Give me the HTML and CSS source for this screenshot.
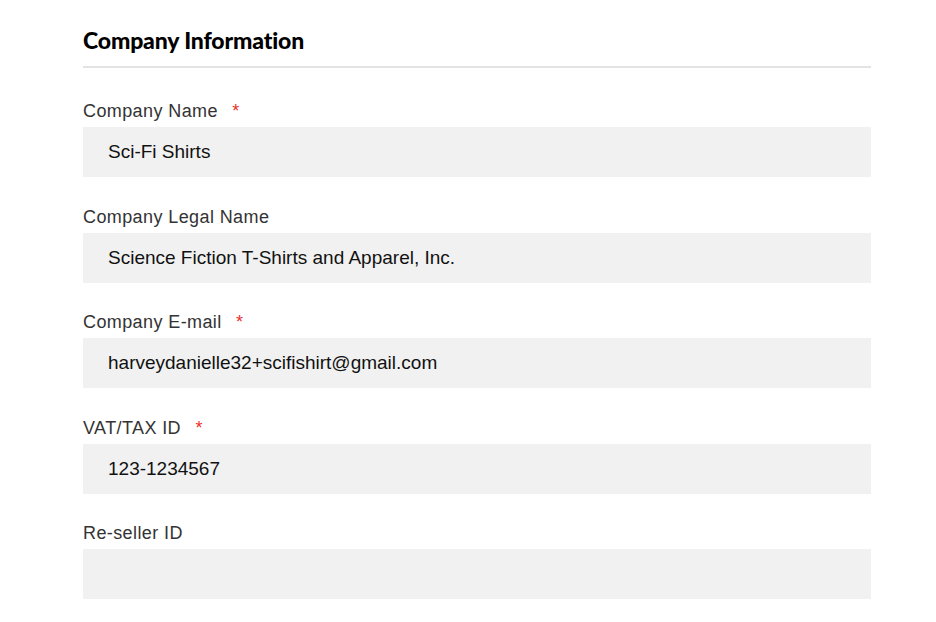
FILE: index.html
```html
<!DOCTYPE html>
<html lang="en">
<head>
    <meta charset="UTF-8">
    <meta name="viewport" content="width=device-width, initial-scale=1.0">
    <title>Company Information</title>
    <link rel="stylesheet" href="styles.css">
</head>
<body>
    <div class="container">
        <h2 class="section-title">Company Information</h2>

        <div class="field">
            <label>Company Name <span class="required">*</span></label>
            <div class="input">Sci-Fi Shirts</div>
        </div>

        <div class="field">
            <label>Company Legal Name</label>
            <div class="input">Science Fiction T-Shirts and Apparel, Inc.</div>
        </div>

        <div class="field">
            <label>Company E-mail <span class="required">*</span></label>
            <div class="input">harveydanielle32+scifishirt@gmail.com</div>
        </div>

        <div class="field">
            <label>VAT/TAX ID <span class="required">*</span></label>
            <div class="input">123-1234567</div>
        </div>

        <div class="field">
            <label>Re-seller ID</label>
            <div class="input"></div>
        </div>
    </div>
</body>
</html>
```

FILE: styles.css
```css
body {
    font-family: "Liberation Sans", Arial, sans-serif;
    margin: 0;
    padding: 0;
    background-color: #fff;
}
.container {
    width: 788px;
    margin-left: 83px;
    padding-top: 26px;
}
.section-title {
    font-family: Lato, "DejaVu Sans", sans-serif;
    font-weight: 900;
    font-size: 23px;
    letter-spacing: -0.15px;
    line-height: 28px;
    color: #000;
    margin: 0;
    padding-bottom: 12px;
    border-bottom: 2px solid #e3e3e3;
}
.field {
    margin-top: 27.5px;
}
.field:first-of-type {
    margin-top: 31px;
}
.field label {
    display: block;
    font-size: 18px;
    letter-spacing: 0.4px;
    color: #333;
    line-height: 24px;
    margin-bottom: 4px;
}
.required {
    color: #e8322b;
    margin-left: 9px;
}
.input {
    height: 50px;
    line-height: 50px;
    background-color: #f1f1f1;
    padding: 0 25px;
    font-size: 19px;
    color: #111;
}
```
